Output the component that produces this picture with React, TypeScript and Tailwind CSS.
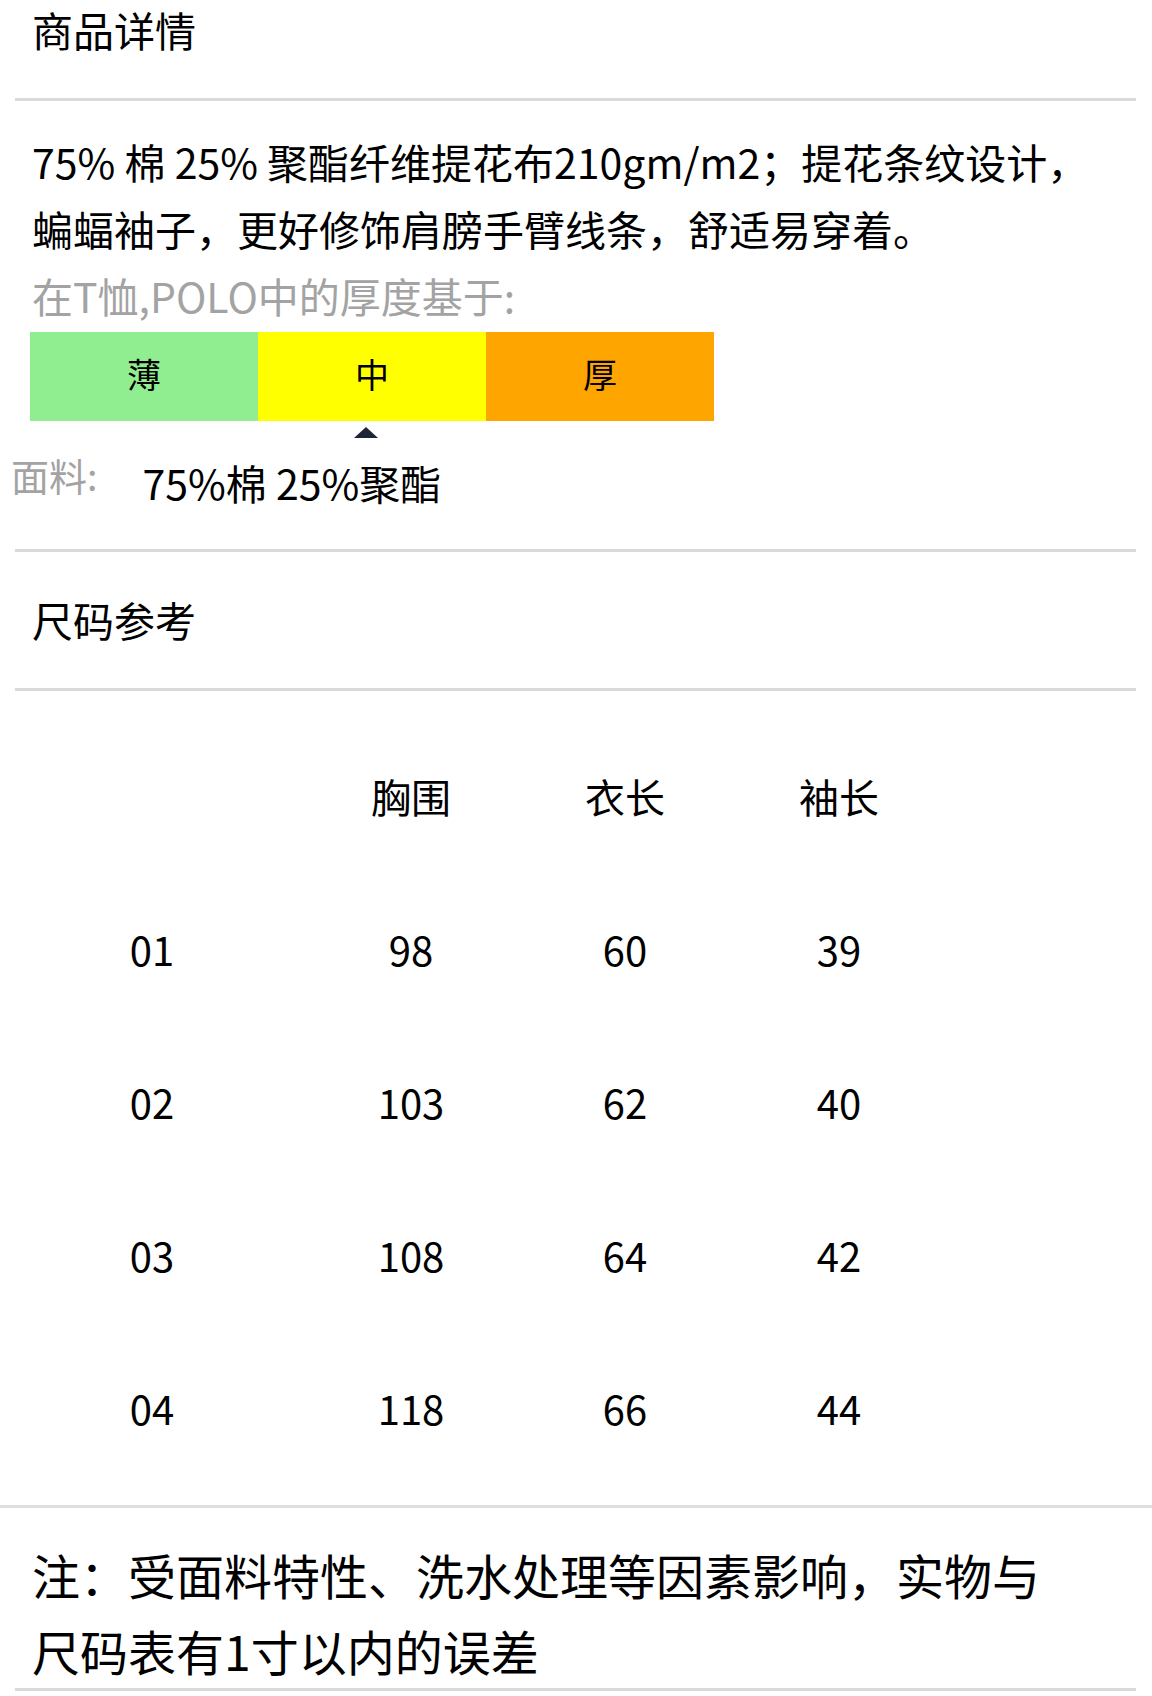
const sizes = [
  { code: '01', chest: '98', length: '60', sleeve: '39' },
  { code: '02', chest: '103', length: '62', sleeve: '40' },
  { code: '03', chest: '108', length: '64', sleeve: '42' },
  { code: '04', chest: '118', length: '66', sleeve: '44' },
];

function Divider({ full = false }: { full?: boolean }) {
  return <div className={full ? 'h-[3px] w-full bg-[#dedede]' : 'ml-[15px] h-[3px] w-[1121px] bg-[#dadada]'} />;
}

export default function App() {
  return (
    <div className="w-[1152px] bg-white font-['Noto_Sans_CJK_SC',sans-serif] text-black">
      {/* 商品详情 */}
      <div className="h-[98px] pl-[32px] text-[41px] leading-[58px]">商品详情</div>
      <Divider />

      <div className="pl-[32px] pt-[27px] text-[41px] leading-[67px]">
        <p className="whitespace-nowrap">75% 棉 25% 聚酯纤维提花布210gm/m2；提花条纹设计，</p>
        <p className="whitespace-nowrap">蝙蝠袖子，更好修饰肩膀手臂线条，舒适易穿着。</p>
        <p className="whitespace-nowrap text-[#a3a3a3]">在T恤,POLO中的厚度基于:</p>
      </div>

      {/* thickness bar */}
      <div className="ml-[30px] mt-[3px] flex h-[89px] w-[684px] text-[34px]">
        <div className="flex flex-1 items-center justify-center bg-[#90ee90] pb-[6px]">薄</div>
        <div className="flex flex-1 items-center justify-center bg-[#ffff00] pb-[6px]">中</div>
        <div className="flex flex-1 items-center justify-center bg-[#ffa500] pb-[6px]">厚</div>
      </div>
      <div className="ml-[354px] mt-[6px] h-0 w-0 border-x-[12px] border-b-[11px] border-x-transparent border-b-[#1f2536]" />

      <div className="flex h-[111px] items-start">
        <span className="ml-[11px] mt-[13px] text-[38px] leading-[48px] text-[#a3a3a3]">面料:</span>
        <span className="ml-[45px] mt-[20px] text-[41px] leading-[48px]">75%棉 25%聚酯</span>
      </div>
      <Divider />

      {/* 尺码参考 */}
      <div className="flex h-[136px] items-center pl-[32px] text-[41px]">尺码参考</div>
      <Divider />

      <div className="pb-[21px] pt-[28px] text-[40px]">
        <div className="grid h-[153px] grid-cols-[304px_214px_214px_214px] items-center text-center">
          <span />
          <span>胸围</span>
          <span>衣长</span>
          <span>袖长</span>
        </div>
        {sizes.map((s) => (
          <div key={s.code} className="grid h-[153px] grid-cols-[304px_214px_214px_214px] items-center text-center">
            <span>{s.code}</span>
            <span>{s.chest}</span>
            <span>{s.length}</span>
            <span>{s.sleeve}</span>
          </div>
        ))}
      </div>
      <Divider full />

      <div className="pl-[32px] pt-[28px] text-[48px] leading-[76px]">
        <p className="whitespace-nowrap">注：受面料特性、洗水处理等因素影响，实物与</p>
        <p className="whitespace-nowrap">尺码表有1寸以内的误差</p>
      </div>
      <Divider />
    </div>
  );
}
